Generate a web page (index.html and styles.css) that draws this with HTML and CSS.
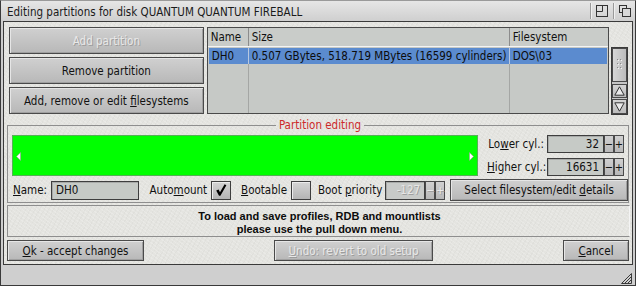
FILE: index.html
```html
<!DOCTYPE html>
<html>
<head>
<meta charset="utf-8">
<title>Editing partitions</title>
<link rel="stylesheet" href="styles.css">
</head>
<body>
<div class="win">
  <div class="titlebar">
    <span class="title">Editing partitions for disk QUANTUM QUANTUM FIREBALL</span>
    <div class="gadgets">
      <span class="gsep"></span>
      <svg class="gad" width="12" height="12" viewBox="0 0 12 12"><rect x="0.5" y="0.5" width="11" height="11" fill="none" stroke="#333"/><path d="M6.5 0.5V6.5H0.5" fill="none" stroke="#333"/></svg>
      <span class="gsep"></span>
      <svg class="gad" width="12" height="12" viewBox="0 0 12 12"><rect x="0.5" y="0.5" width="7" height="7" fill="none" stroke="#333"/><rect x="3.5" y="3.5" width="8" height="8" fill="#d8d8d8" stroke="#333"/></svg>
    </div>
  </div>
  <div class="body">
    <div class="top">
      <div class="leftcol">
        <div class="btn dis"><span>Add partition</span></div>
        <div class="btn"><span>Remove partition</span></div>
        <div class="btn"><span>Add, remove or edit <u>f</u>ilesystems</span></div>
      </div>
      <div class="list">
        <div class="lhead">
          <div class="c1">Name</div><div class="c2">Size</div><div class="c3">Filesystem</div>
        </div>
        <div class="lbody">
          <div class="lrow sel">
            <div class="c1">DH0</div><div class="c2">0.507 GBytes, 518.719 MBytes (16599 cylinders)</div><div class="c3">DOS\03</div>
          </div>
          <div class="lrow fill">
            <div class="c1"></div><div class="c2"></div><div class="c3"></div>
          </div>
        </div>
      </div>
      <div class="scroll">
        <div class="knob"><svg width="5" height="12" viewBox="0 0 5 12"><g fill="#8a8a8a"><rect x="0" y="0" width="1" height="1"/><rect x="3" y="0" width="1" height="1"/><rect x="0" y="4" width="1" height="1"/><rect x="3" y="4" width="1" height="1"/><rect x="0" y="8" width="1" height="1"/><rect x="3" y="8" width="1" height="1"/></g><g fill="#f4f4f4"><rect x="1" y="1" width="1" height="1"/><rect x="4" y="1" width="1" height="1"/><rect x="1" y="5" width="1" height="1"/><rect x="4" y="5" width="1" height="1"/><rect x="1" y="9" width="1" height="1"/><rect x="4" y="9" width="1" height="1"/></g></svg></div>
        <div class="arr"><svg width="11" height="10" viewBox="0 0 11 10"><path d="M5.5 0.8L10.2 9.2H0.8Z" fill="#eaeaea" stroke="#333" stroke-width="1"/></svg></div>
        <div class="arr"><svg width="11" height="10" viewBox="0 0 11 10"><path d="M5.5 9.2L10.2 0.8H0.8Z" fill="#eaeaea" stroke="#333" stroke-width="1"/></svg></div>
      </div>
    </div>

    <fieldset class="group">
      <legend>Partition editing</legend>
      <div class="rowa">
        <div class="bar">
          <svg width="5" height="9" viewBox="0 0 5 9"><path d="M4.5 0.5V8.5L0.5 4.5Z" fill="#fff" stroke="#9a9a9a" stroke-width="0.6"/></svg>
          <svg width="5" height="9" viewBox="0 0 5 9"><path d="M0.5 0.5V8.5L4.5 4.5Z" fill="#fff" stroke="#9a9a9a" stroke-width="0.6"/></svg>
        </div>
        <div class="cyls">
          <div class="cyl">
            <span class="clabel">Lo<u>w</u>er cyl.:</span>
            <div class="field num">32</div>
            <div class="spin">&minus;</div><div class="spin">+</div>
          </div>
          <div class="cyl">
            <span class="clabel"><u>H</u>igher cyl.:</span>
            <div class="field num">16631</div>
            <div class="spin">&minus;</div><div class="spin">+</div>
          </div>
        </div>
      </div>
      <div class="rowb">
        <span class="lbl"><u>N</u>ame:</span>
        <div class="field name">DH0</div>
        <span class="lbl automount">Auto<u>m</u>ount</span>
        <div class="check"><svg width="14" height="14" viewBox="0 0 14 14"><path d="M2.2 7.6L4.6 6.4L6 9.2L10.6 1.2L12.4 2.2L6.4 12.8H5Z" fill="#000"/></svg></div>
        <span class="lbl bootable"><u>B</u>ootable</span>
        <div class="check"></div>
        <span class="lbl prio">Boot <u>p</u>riority</span>
        <div class="field num pfield dtxt">-127</div>
        <div class="spin dspin">&minus;</div><div class="spin dspin">+</div>
        <div class="btn sel-btn"><span>Select filesystem/edit <u>d</u>etails</span></div>
      </div>
    </fieldset>

    <div class="info">
      <div>To load and save profiles, RDB and mountlists</div>
      <div>please use the pull down menu.</div>
    </div>

    <div class="bottom">
      <div class="btn okb"><span><u>O</u>k - accept changes</span></div>
      <div class="btn dis undob"><span><u>U</u>ndo: revert to old setup</span></div>
      <div class="btn cancelb"><span><u>C</u>ancel</span></div>
    </div>
  </div>
  <div class="strip">
    <svg class="resize" width="11" height="11" viewBox="0 0 11 11"><path d="M10.5 0.5L0.5 10.5M10.5 3.5L3.5 10.5M10.5 6.5L6.5 10.5M0.5 10.5H10.5V0.5" fill="none" stroke="#3a3a3a" stroke-width="1"/></svg>
  </div>
</div>
</body>
</html>
```
FILE: styles.css
```css
* { box-sizing: border-box; }
html, body { margin: 0; padding: 0; }
body {
  width: 636px;
  height: 286px;
  overflow: hidden;
  background: #cfcfcf;
  font-family: "DejaVu Sans Condensed", "DejaVu Sans", sans-serif;
  font-stretch: condensed;
  font-size: 11.5px;
  color: #111;
}
u { text-decoration: underline; text-underline-offset: 1px; }

.win {
  width: 636px;
  height: 286px;
  border: 1px solid #3a3a3a;
  border-top-color: #9a9a9a;
  background: #cdcdcd;
  display: flex;
  flex-direction: column;
}

/* title bar */
.titlebar {
  height: 20px;
  flex: none;
  display: flex;
  align-items: center;
  padding-left: 6px;
  background: linear-gradient(#e6e6e6, #cfcfcf);
}
.title { flex: 1; color: #1a1a1a; font-size: 11.5px; padding-top: 2px; }
.gadgets { display: flex; align-items: center; height: 20px; }
.gsep { width: 2px; height: 16px; border-left: 1px solid #9a9a9a; border-right: 1px solid #f0f0f0; margin: 0 4px; }
.gad { display: block; margin-right: 1px; }
.gadgets .gad:last-child { margin-right: 4px; }

/* main body frame */
.body {
  height: 244px;
  flex: none;
  margin: 0 2px;
  border: 1px solid #3a3a3a;
  background-color: #e4e4e0;
  background-image:
    repeating-linear-gradient(37deg, rgba(255,255,255,0.18) 0 1px, transparent 1px 3px),
    repeating-linear-gradient(-61deg, rgba(0,0,0,0.025) 0 1px, transparent 1px 4px);
  display: flex;
  flex-direction: column;
}

.btn {
  display: flex;
  align-items: center;
  justify-content: center;
  border: 1px solid #4a4a4a;
  background: linear-gradient(#d0d0d0, #b8b8b8);
  box-shadow: inset 1px 1px 0 #e6e6e6, inset -1px -1px 0 #a0a0a0;
  white-space: nowrap;
  color: #111;
}
.dis { color: #e8e8e8; text-shadow: 1px 1px 0 #9c9c9c; }

.top {
  display: flex;
  height: 87px;
  margin: 5px 4px 0 5px;
  flex: none;
}
.leftcol {
  width: 195px;
  display: flex;
  flex-direction: column;
  gap: 3px;
}
.leftcol .btn { height: 27px; }

.list {
  width: 403px;
  margin-left: 3px;
  border: 1px solid #4a4a4a;
  background: #c6c9c6;
  display: flex;
  flex-direction: column;
}
.lhead {
  display: flex;
  height: 19px;
  flex: none;
  border-bottom: 1px solid #f4f4f4;
  background: #c9ccc9;
}
.lhead > div { display: flex; align-items: center; padding-left: 3px; border-right: 1px solid #8c8c8c; }
.lhead > div:last-child { border-right: none; }
.c1 { width: 41px; }
.c2 { width: 261px; }
.c3 { flex: 1; }
.lbody { flex: 1; display: flex; flex-direction: column; padding: 1px 1px 0 1px; }
.lrow { display: flex; }
.lrow > div { border-right: 1px solid #a4a6a4; padding-left: 3px; white-space: nowrap; }
.lrow > div:last-child { border-right: none; }
.lrow .c1 { width: 40px; }
.sel { height: 16px; background: #5b8bcf; }
.sel > div { line-height: 16px; border-right-color: #b8c8e0; color: #0c0c0c; }
.fill { flex: 1; }

.scroll {
  width: 17px;
  height: 68px;
  margin: 20px 0 0 2px;
  border: 1px solid #3a3a3a;
  background: #c6c6c6;
  display: flex;
  flex-direction: column;
  padding: 0;
}
.knob {
  height: 35px;
  border: 1px solid #4a4a4a;
  background: linear-gradient(90deg, #d6d6d6, #bcbcbc);
  display: flex;
  align-items: center;
  justify-content: center;
  margin-bottom: 2px;
}
.arr {
  height: 15px;
  border: 1px solid #4a4a4a;
  background: linear-gradient(#d4d4d4, #bcbcbc);
  display: flex;
  align-items: center;
  justify-content: center;
}
.arr + .arr { margin-top: 1px; }

/* group */
.group {
  margin: 5px 3px 0 3px;
  padding: 4px 0 1px 4px;
  border: 1px solid #8e8e8e;
  min-width: 0;
  flex: none;
}
.group legend {
  margin: 0 auto;
  padding: 0 3px;
  color: #cc2a2a;
  line-height: 12px;
  font-size: 11.5px;
}
.rowa { display: flex; height: 41px; }
.bar {
  width: 466px;
  height: 41px;
  background: #00ff00;
  border: 1px solid #55b055;
  display: flex;
  align-items: center;
  justify-content: space-between;
  padding: 1px 3px 0 3px;
}
.bar svg { display: block; }
.cyls {
  margin-left: 9px;
  display: flex;
  flex-direction: column;
  gap: 5px;
}
.cyl { display: flex; align-items: center; height: 18px; }
.clabel { width: 57px; text-align: right; margin-right: 3px; white-space: nowrap; }
.field {
  border: 1px solid #3e3e3e;
  background: #c6cac6;
  box-shadow: inset 1px 1px 0 #a8aaa8;
  display: flex;
  align-items: center;
  white-space: nowrap;
}
.num { justify-content: flex-end; padding-right: 4px; }
.cyl .field { width: 57px; height: 18px; }
.spin {
  width: 10px;
  height: 18px;
  border: 1px solid #4a4a4a;
  background: linear-gradient(#d0d0d0, #b8b8b8);
  display: flex;
  align-items: center;
  justify-content: center;
  font-size: 11px;
  line-height: 1;
}

.rowb { display: flex; align-items: center; height: 22px; margin-top: 3px; }
.lbl { white-space: nowrap; }
.rowb > .lbl:first-child { margin-left: 1px; }
.field.name { width: 88px; height: 19px; margin-left: 4px; padding-left: 4px; }
.automount { margin-left: 11px; }
.check {
  width: 20px;
  height: 19px;
  margin-left: 4px;
  border: 1px solid #3e3e3e;
  background: linear-gradient(#d4d4d4, #b4b4b4);
  box-shadow: inset 1px 1px 0 #ececec;
  display: flex;
  align-items: center;
  justify-content: center;
}
.bootable { margin-left: 10px; }
.prio { margin-left: 7px; }
.pfield { width: 40px; height: 19px; margin-left: 3px; background: #c8cac8; }
.dtxt { color: #e6e6e6; text-shadow: 1px 1px 0 #a0a0a0; }
.dspin { height: 19px; color: #eaeaea; text-shadow: 1px 1px 0 #a0a0a0; }
.sel-btn { width: 179px; height: 22px; margin-left: 5px; }

/* info */
.info {
  margin: 2px 2px 0 3px;
  height: 32px;
  border: 1px solid #8e8e8e;
  border-right-color: #f4f4f4;
  flex: none;
  display: flex;
  flex-direction: column;
  align-items: center;
  justify-content: center;
  font-family: "Liberation Sans", Arial, sans-serif;
  font-stretch: normal;
  font-weight: bold;
  font-size: 11px;
  line-height: 13px;
  padding: 4px 0 0 2px;
  color: #0c0c0c;
}

.bottom {
  display: flex;
  justify-content: space-between;
  margin: 3px 3px 0 3px;
  height: 21px;
  flex: none;
}
.bottom .btn { height: 21px; }
.okb { width: 137px; }
.undob { width: 159px; }
.cancelb { width: 66px; }

.strip {
  flex: 1;
  display: flex;
  justify-content: flex-end;
  align-items: flex-end;
  padding: 0 3px 1px 0;
  background: #cfcfcf;
}
.resize { display: block; }
```
